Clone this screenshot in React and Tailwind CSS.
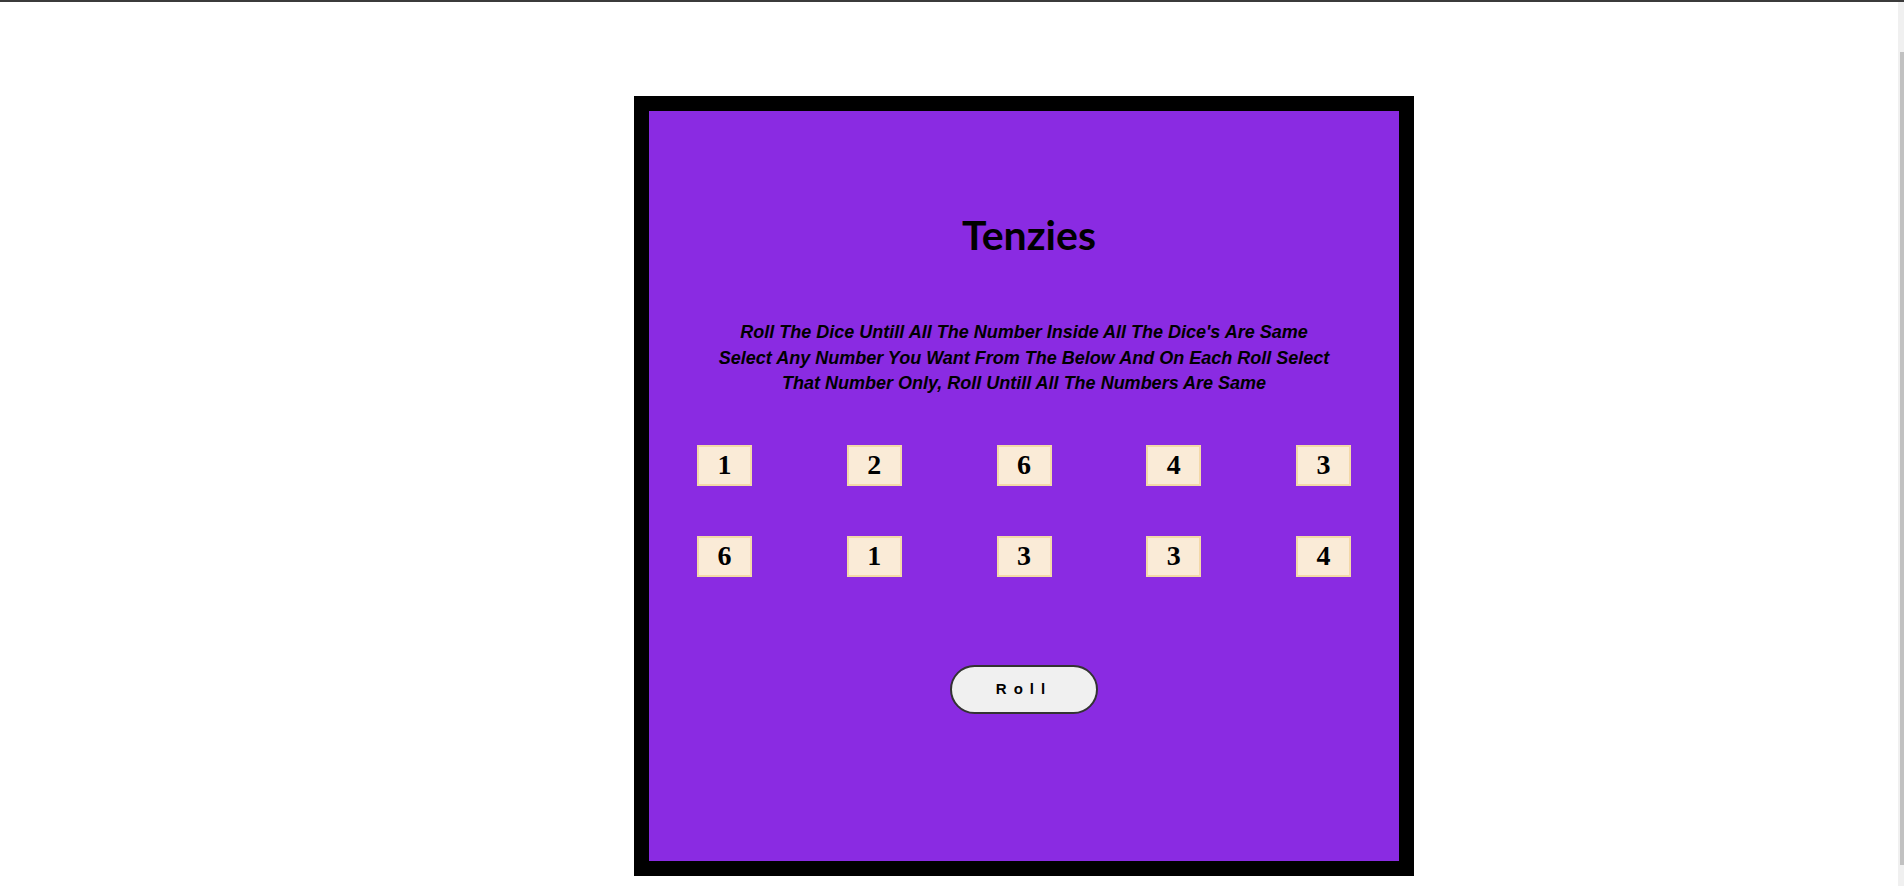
import React, { useState } from 'react';

const rollAll = () => [1, 2, 6, 4, 3, 6, 1, 3, 3, 4];

function Die({ value }) {
  return (
    <div className="w-[55px] h-[41px] bg-[#faebd7] border-2 border-[#f3d9a8] flex items-center justify-center font-['Liberation_Serif',serif] font-bold text-[28px] leading-none text-black">
      {value}
    </div>
  );
}

function App() {
  const [dice, setDice] = useState(rollAll());

  const roll = () => {
    setDice(dice.map(() => Math.ceil(Math.random() * 6)));
  };

  return (
    <div className="h-screen flex flex-col bg-white overflow-hidden">
      <div className="h-[2px] bg-[#3b3b3b] shrink-0" />
      <div className="flex-1 flex">
        <div className="flex-1 pt-[94px] pl-[634px]">
          <div className="w-[780px] h-[780px] border-[15px] border-black bg-[#8a2be2] flex flex-col">
            <h1 className="mt-[100px] ml-[10px] text-center font-['Lato',sans-serif] font-bold text-[41px] leading-[48px] text-black">
              Tenzies
            </h1>
            <p className="mt-[61px] whitespace-nowrap text-center font-['Liberation_Sans',sans-serif] font-bold italic text-[18px] leading-[25.5px] text-black">
              Roll The Dice Untill All The Number Inside All The Dice's Are Same
              <br />
              Select Any Number You Want From The Below And On Each Roll Select
              <br />
              That Number Only, Roll Untill All The Numbers Are Same
            </p>
            <div className="mt-[48px] px-[48px] flex flex-col gap-[50px]">
              <div className="flex justify-between">
                {dice.slice(0, 5).map((d, i) => (
                  <Die key={i} value={d} />
                ))}
              </div>
              <div className="flex justify-between">
                {dice.slice(5).map((d, i) => (
                  <Die key={i} value={d} />
                ))}
              </div>
            </div>
            <div className="mt-[88px] flex justify-center">
              <button
                onClick={roll}
                className="w-[148px] h-[49px] rounded-full border-2 border-[#333333] bg-[#f0f0f0] font-['Liberation_Sans',sans-serif] font-bold text-[15px] tracking-[7px] text-black"
              >
                Roll
              </button>
            </div>
          </div>
        </div>
        {/* page scrollbar */}
        <div className="w-[6px] bg-[#f0f0f0] pt-[50px] pl-[2px]">
          <div className="h-[813px] bg-[#c1c1c1]" />
        </div>
      </div>
    </div>
  );
}

export default App;
